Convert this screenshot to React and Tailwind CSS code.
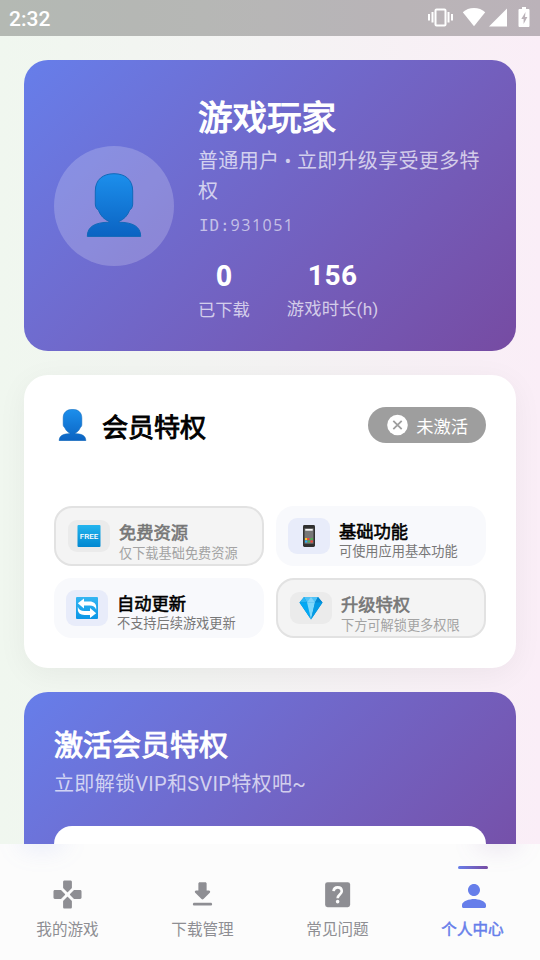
import React from "react";

const UserEmoji = ({ className }) => (
  <svg viewBox="0 0 56 64" className={className}>
    <defs>
      <linearGradient id="userFill" x1="0" y1="0" x2="0" y2="1">
        <stop offset="0" stopColor="#1c8fec" />
        <stop offset="1" stopColor="#0b63c2" />
      </linearGradient>
    </defs>
    <path
      fill="url(#userFill)"
      stroke="#1269b8"
      strokeWidth="1"
      d="M28 .7C17 .7 9.300 6.500 9.300 18v13c0 3.500 1.700 5 3.200 6.500 2 5 5.500 9 10.500 10.800v.9C9 49.500 1.300 53.500 1.300 63.400h53.400C54.700 53.500 47 49.500 33 49.200v-.9c5-1.800 8.500-5.800 10.500-10.800 1.500-1.500 3.200-3 3.200-6.500V18C46.700 6.500 39 .7 28 .7z"
    />
  </svg>
);

const FreeEmoji = () => (
  <svg viewBox="0 0 24 24" className="h-6 w-6">
    <defs>
      <linearGradient id="freeFill" x1="0" y1="0" x2="0" y2="1">
        <stop offset="0" stopColor="#22b4ee" />
        <stop offset="1" stopColor="#0288d1" />
      </linearGradient>
    </defs>
    <rect x=".5" y="1" width="23" height="22" rx="1" fill="url(#freeFill)" />
    <text
      x="12"
      y="14.700"
      textAnchor="middle"
      fontFamily="Roboto, sans-serif"
      fontSize="8"
      fontWeight="500"
      fill="#fff"
      textLength="18.500"
      lengthAdjust="spacingAndGlyphs"
    >
      FREE
    </text>
  </svg>
);

const PhoneEmoji = () => (
  <svg viewBox="0 0 24 24" className="h-6 w-6">
    <rect x="6" y="1" width="12" height="22" rx="1.400" fill="#303030" />
    <rect x="7.500" y="4.300" width="9" height="15.400" fill="#777" />
    <rect x="8.300" y="5" width="7.400" height="1.700" fill="#f5f5f5" />
    <rect x="8" y="14" width="2.200" height="2" fill="#ffca28" />
    <rect x="10.200" y="14" width="2.200" height="2" fill="#f44336" />
    <rect x="13.500" y="14" width="2.300" height="2" fill="#4caf50" />
    <rect x="8" y="16.500" width="2.200" height="2" fill="#29b6f6" />
    <rect x="11" y="16.500" width="2" height="2" fill="#4caf50" />
    <rect x="13.500" y="16.500" width="2.300" height="2" fill="#f44336" />
  </svg>
);

const RefreshEmoji = () => (
  <svg viewBox="0 0 24 24" className="h-6 w-6">
    <defs>
      <linearGradient id="refreshFill" x1="0" y1="0" x2="0" y2="1">
        <stop offset="0" stopColor="#35b6f2" />
        <stop offset="1" stopColor="#0a96e6" />
      </linearGradient>
    </defs>
    <rect x="1" y="1" width="22" height="22" rx="1" fill="url(#refreshFill)" />
    <g fill="#fff">
      <path d="M2.800 7.300 9 2.500v3h5.500c4.400 0 6.700 2.300 6.700 5.700v2.600c-1.200-2.900-3-4.200-6.600-4.200H9v2.800z" />
      <path d="M21.200 17.200 15 22v-3H9.500c-4.400 0-6.700-2.300-6.700-5.700v-2.600c1.200 2.900 3 4.200 6.600 4.200H15v-2.800z" />
    </g>
  </svg>
);

const GemEmoji = () => (
  <svg viewBox="0 0 24 24" className="h-6 w-6">
    <path fill="#0288d1" d="M5 1h14l4.500 5.500L12 23.500.500 6.500z" />
    <path fill="#4fc3f7" d="M5 1h14l-3 5.500H8z" />
    <path fill="#81d4fa" d="M8 6.500 12 1l4 5.500z" />
    <path fill="#29b6f6" d="M.5 6.500 5 1l3 5.500z" />
    <path fill="#0288d1" d="M23.500 6.500 19 1l-3 5.500z" />
    <path fill="#03a9f4" d="M.5 6.500H8l4 17z" />
    <path fill="#7fd8fb" d="M8 6.500h8l-4 17z" />
    <path fill="#039be5" d="M23.500 6.500H16l-4 17z" />
  </svg>
);

const GamepadIcon = () => (
  <svg viewBox="0 0 24 24" className="h-[33px] w-[33px]" fill="currentColor">
    {[0, 90, 180, 270].map((deg) => (
      <path
        key={deg}
        transform={`rotate(${deg} 12 12)`}
        d="M15.200 7.100V2.800c0-.55-.45-1-1-1H9.800c-.55 0-1 .45-1 1v4.300c0 .15.05.25.150.350l2.700 2.700c.2.2.5.2.7 0l2.700-2.700c.1-.1.15-.2.15-.350z"
      />
    ))}
  </svg>
);

const DownloadIcon = () => (
  <svg viewBox="0 0 24 24" className="h-[33px] w-[33px]" fill="currentColor">
    <path d="M16.590 9H15V4c0-.55-.45-1-1-1h-4c-.55 0-1 .45-1 1v5H7.410c-.89 0-1.340 1.080-.71 1.710l4.590 4.590c.39.39 1.020.39 1.410 0l4.590-4.590c.63-.63.19-1.710-.7-1.710zM5 19c0 .55.45 1 1 1h12c.55 0 1-.45 1-1s-.45-1-1-1H6c-.55 0-1 .45-1 1z" />
  </svg>
);

const HelpIcon = () => (
  <svg viewBox="0 0 24 24" className="h-[33px] w-[33px]">
    <rect x="3" y="3" width="18.200" height="18.200" rx="1.800" fill="currentColor" />
    <path
      d="M9.100 9.500C9.300 7.700 10.500 6.800 12.100 6.800c1.800 0 3 1.200 3 2.800 0 2.300-3 2.500-3 5.100"
      fill="none"
      stroke="#fcfcfc"
      strokeWidth="1.900"
    />
    <circle cx="12.100" cy="17.200" r="1.300" fill="#fcfcfc" />
  </svg>
);

const PersonIcon = () => (
  <svg viewBox="0 0 24 24" className="mt-[3px] ml-[3px] h-9 w-9 shrink-0" fill="currentColor">
    <path d="M12 12c2.210 0 4-1.790 4-4s-1.790-4-4-4-4 1.790-4 4 1.790 4 4 4zm0 2c-2.670 0-8 1.340-8 4v1c0 .55.45 1 1 1h14c.55 0 1-.45 1-1v-1c0-2.660-5.330-4-8-4z" />
  </svg>
);

const features = [
  { icon: <FreeEmoji />, title: "免费资源", desc: "仅下载基础免费资源", locked: true },
  { icon: <PhoneEmoji />, title: "基础功能", desc: "可使用应用基本功能" },
  { icon: <RefreshEmoji />, title: "自动更新", desc: "不支持后续游戏更新" },
  { icon: <GemEmoji />, title: "升级特权", desc: "下方可解锁更多权限", locked: true },
];

const tabs = [
  { icon: <GamepadIcon />, label: "我的游戏" },
  { icon: <DownloadIcon />, label: "下载管理" },
  { icon: <HelpIcon />, label: "常见问题" },
  { icon: <PersonIcon />, label: "个人中心", active: true },
];

const StatusBar = () => (
  <div className="flex h-9 items-center justify-between bg-black/25 pr-[10px] pl-[9px] text-white">
    <span className="pt-px text-[21px] leading-8 font-medium">2:32</span>
    <div className="mb-[2px] flex items-center">
      {/* Vibrate */}
      <svg viewBox="0 0 26 20" className="mr-[9px] h-5 w-[26px]" fill="none" stroke="#fff" strokeWidth="2">
        <rect x="8.500" y="2.500" width="10" height="16" rx="1" />
        <path d="M5.500 5v10.500M21.500 5v10.500M2 7v6.500M25 7v6.500" />
      </svg>
      {/* Wifi */}
      <svg viewBox="0 0 24 20" className="mr-[2px] h-5 w-6" fill="#fff">
        <path d="M12 19.300 .8 5.200C3.700 2.500 7.700 1 12 1s8.300 1.500 11.200 4.200z" />
      </svg>
      {/* Signal */}
      <svg viewBox="0 0 20 20" className="mr-[10px] h-5 w-5" fill="#fff">
        <path d="M19 1.500v18H1z" />
      </svg>
      {/* Battery */}
      <svg viewBox="0 0 12 20" className="h-5 w-3" fill="#fff">
        <path
          fillRule="evenodd"
          d="M4 0h4v2h2.500c.5 0 1 .5 1 1v16c0 .5-.5 1-1 1h-9c-.5 0-1-.5-1-1V3c0-.5.5-1 1-1H4zm3.500 5L3.300 12h2.300v5l3.800-7H7z"
        />
      </svg>
    </div>
  </div>
);

const ProfileCard = () => (
  <section className="flex h-[291px] items-center gap-6 rounded-3xl bg-linear-135 from-[#667eea] to-[#764ba2] px-[30px] text-white">
    <div className="flex h-[120px] w-[120px] shrink-0 items-center justify-center rounded-full bg-white/20">
      <UserEmoji className="mb-px h-16 w-14" />
    </div>
    <div>
      <h1 className="text-[34.500px] leading-[56px] [-webkit-text-stroke:1.200px]">游戏玩家</h1>
      <p className="text-[20px] leading-[30px] tracking-[0.320px] text-white/70">
        普通用户 • 立即升级享受更多特权
      </p>
      <p className="mt-[7px] pl-px text-[16px] leading-6 text-white/60">
        <span className="font-['DejaVu_Sans_Mono',monospace] tracking-[0.900px]">ID:</span>
        <span className="font-['Open_Sans',sans-serif] tracking-[1.500px]">931051</span>
      </p>
      <div className="mt-[18px] flex gap-9 text-center">
        <div>
          <p className="mb-[3px] font-['Noto_Sans',sans-serif] text-[28px] leading-[39px] font-bold">0</p>
          <p className="text-[17.300px] leading-6 text-white/70">已下载</p>
        </div>
        <div className="pl-px">
          <p className="mb-[2px] text-[28px] leading-[39px] font-bold tracking-[0.500px]">156</p>
          <p className="text-[17.300px] leading-6 tracking-[0.150px] text-white/70">游戏时长(h)</p>
        </div>
      </div>
    </div>
  </section>
);

const FeatureItem = ({ icon, title, desc, locked }) => (
  <div
    className={`flex h-[60px] gap-[9px] rounded-[18px] p-3 ${
      locked ? "border-2 border-[#e2e2e2] bg-[#f4f4f4]" : "bg-[#f8f9fc]"
    }`}
  >
    <div
      className={`flex w-[42px] shrink-0 items-center justify-center rounded-[9px] ${
        locked ? "bg-[#ebebeb]" : "bg-[#e8ecfa]"
      }`}
    >
      {icon}
    </div>
    <div className="whitespace-nowrap">
      <h3
        className={`text-[17.300px] leading-[28px] [-webkit-text-stroke:0.600px] ${
          locked ? "-mt-px text-[#777]" : "text-black"
        }`}
      >
        {title}
      </h3>
      <p className={`text-[13.200px] leading-[13px] ${locked ? "text-[#a3a3a3]" : "-mt-px text-[#777]"}`}>{desc}</p>
    </div>
  </div>
);

const MemberCard = () => (
  <section className="mt-6 h-[293px] rounded-3xl bg-white p-[30px] shadow-[0_6px_30px_rgba(0,0,0,0.050)]">
    <div className="flex h-[41px] items-center justify-between">
      <div className="flex items-center">
        <UserEmoji className="mr-[15px] mb-px ml-1 h-8 w-[29px]" />
        <h2 className="pt-[5px] text-[26px] leading-[36px] text-black [-webkit-text-stroke:0.900px]">会员特权</h2>
      </div>
      <div className="mb-[2px] flex h-9 items-center gap-[7px] rounded-full bg-[#9e9e9e] pr-[18px] pl-[19px] text-white">
        <svg viewBox="0 0 22 22" className="h-[22px] w-[22px]">
          <circle cx="10.500" cy="11" r="10.300" fill="#fff" />
          <path d="m6.300 6.800 8.400 8.400M14.700 6.800l-8.400 8.400" stroke="#9e9e9e" strokeWidth="1.800" />
        </svg>
        <span className="pt-1 text-[17.300px] leading-8">未激活</span>
      </div>
    </div>
    <div className="mt-[60px] grid grid-cols-2 gap-3">
      {features.map((item) => (
        <FeatureItem key={item.title} {...item} />
      ))}
    </div>
  </section>
);

const ActivateCard = () => (
  <section className="mt-6 h-[230px] rounded-3xl bg-linear-135 from-[#667eea] to-[#764ba2] p-[30px] text-white">
    <h2 className="pt-[2px] text-[29px] leading-[44px] [-webkit-text-stroke:1px]">激活会员特权</h2>
    <p className="mt-px text-[20px] leading-[30px] tracking-[0.320px] text-white/70">立即解锁VIP和SVIP特权吧~</p>
    <div className="mt-[27px] h-[66px] rounded-[18px] bg-white" />
  </section>
);

const BottomNav = () => (
  <nav className="relative grid h-[116px] grid-cols-4 overflow-hidden bg-[#fcfcfc]">
    {/* soft glow of the card above */}
    <span className="absolute -top-4 left-5 h-5 w-11 rounded-full bg-[#667eea]/15 blur-md" />
    <span className="absolute -top-4 right-5 h-5 w-11 rounded-full bg-[#764ba2]/15 blur-md" />
    {tabs.map(({ icon, label, active }) => (
      <div
        key={label}
        className={`flex flex-col items-center ${active ? "text-[#667eea]" : "text-[#8e8e93]"}`}
      >
        <div className={`mt-[22px] h-[3px] w-[30px] rounded-full ${active ? "bg-linear-to-r from-[#667eea] to-[#764ba2]" : ""}`} />
        <div className="mt-[9px] flex h-[33px] items-center">{icon}</div>
        <span className={`mt-[7px] text-[15.600px] leading-6 ${active ? "[-webkit-text-stroke:0.500px]" : ""}`}>
          {label}
        </span>
      </div>
    ))}
  </nav>
);

const App = () => {
  return (
    <div className="flex h-screen flex-col overflow-hidden bg-linear-to-r from-[#f0f7ef] via-[#f4f3f3] to-[#faeef7] font-[Roboto,'Noto_Sans_CJK_SC',sans-serif]">
      <StatusBar />
      <main className="min-h-0 flex-1 overflow-hidden px-6 pt-6">
        <ProfileCard />
        <MemberCard />
        <ActivateCard />
      </main>
      <BottomNav />
    </div>
  );
};

export default App;
